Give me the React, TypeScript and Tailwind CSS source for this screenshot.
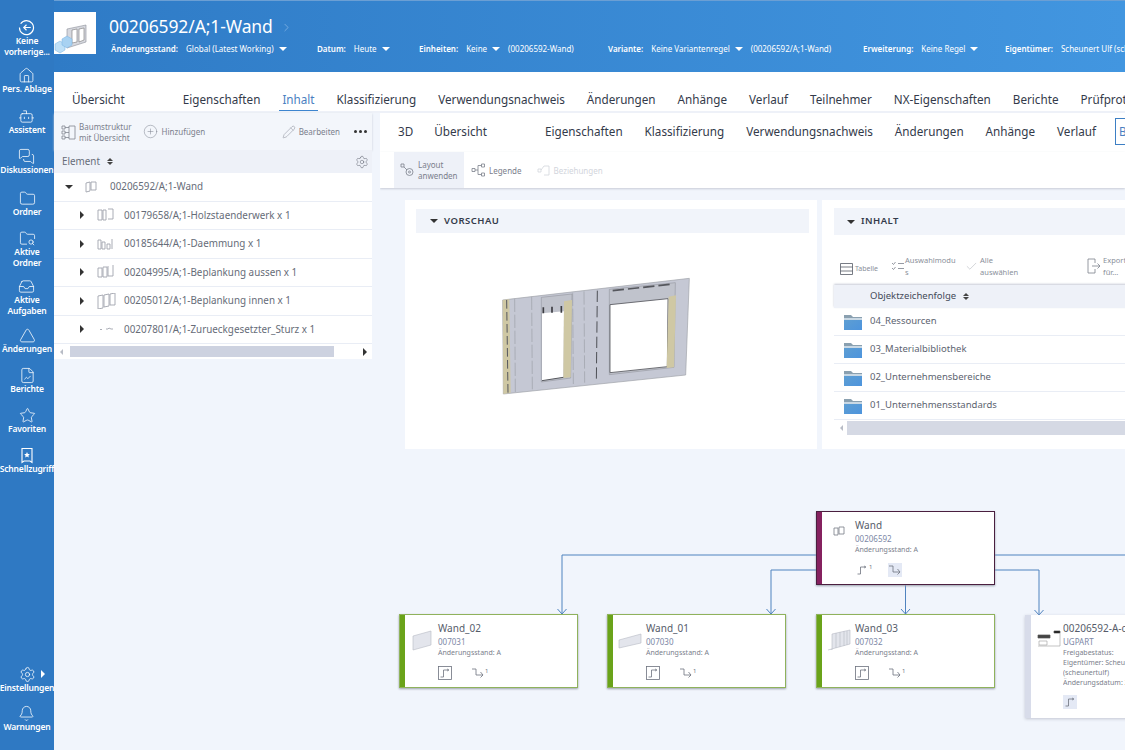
import {
  Bell,
  Bot,
  Check,
  ChevronRight,
  CirclePlus,
  FileChartLine,
  Folder,
  FolderSearch,
  House,
  Inbox,
  MessagesSquare,
  Pencil,
  Settings,
  Star,
  Triangle,
} from "lucide-react";
import type { ReactNode } from "react";

function Caret({ className = "border-t-white" }: { className?: string }) {
  return <span className={`inline-block h-0 w-0 shrink-0 border-x-[4px] border-t-[4px] border-x-transparent ${className}`} />;
}

function SideRight({ className = "" }: { className?: string }) {
  return <span className={`inline-block h-0 w-0 shrink-0 border-y-[4px] border-l-[4px] border-y-transparent border-l-[#333] ${className}`} />;
}

function SideItem({ icon, lines, className = "" }: { icon: ReactNode; lines: string[]; className?: string }) {
  return (
    <div className={`flex flex-col items-center text-center text-[8.5px] font-semibold leading-[11px] tracking-[-0.15px] text-white ${className}`}>
      <div className="flex h-[16px] items-center justify-center">{icon}</div>
      <div className="whitespace-nowrap">
        {lines.map((l) => (
          <div key={l}>{l}</div>
        ))}
      </div>
    </div>
  );
}

const sideIcon = { size: 17, strokeWidth: 1.1, color: "white" };

function BackIcon() {
  return (
    <svg width="17" height="17" viewBox="0 0 16 16" fill="none" stroke="white" strokeWidth="1.1">
      <path d="M2.500 4.500A6.600 6.600 0 1 1 1.400 8" />
      <path d="M12 8H5.500M8 5.400 5.400 8 8 10.600" />
    </svg>
  );
}

function QuickIcon() {
  return (
    <svg width="14" height="17" viewBox="0 0 14 16" fill="none" stroke="white" strokeWidth="1.1">
      <path d="M2 1h10v14l-2-1.500H4L2 15z" />
      <path d="m7 4.500.9 1.900 2 .2-1.500 1.400.4 2L7 9.100l-1.800.9.4-2-1.500-1.400 2-.2z" fill="white" stroke="none" />
    </svg>
  );
}

function Sidebar() {
  return (
    <aside className="flex h-full w-[54px] shrink-0 flex-col justify-between bg-[#2f79c3] pb-[18px] pt-[19px]">
      <div className="flex flex-col items-center">
        <SideItem icon={<BackIcon />} lines={["Keine", "vorherige..."]} />
        <SideItem icon={<House {...sideIcon} />} lines={["Pers. Ablage"]} className="mt-[10px]" />
        <SideItem icon={<Bot {...sideIcon} />} lines={["Assistent"]} className="mt-[14px]" />
        <SideItem icon={<MessagesSquare {...sideIcon} />} lines={["Diskussionen"]} className="mt-[13px]" />
        <SideItem icon={<Folder {...sideIcon} />} lines={["Ordner"]} className="mt-[15px]" />
        <SideItem icon={<FolderSearch {...sideIcon} />} lines={["Aktive", "Ordner"]} className="mt-[13px]" />
        <SideItem icon={<Inbox {...sideIcon} />} lines={["Aktive", "Aufgaben"]} className="mt-[10px]" />
        <SideItem icon={<Triangle {...sideIcon} />} lines={["Änderungen"]} className="mt-[11px]" />
        <SideItem icon={<FileChartLine {...sideIcon} />} lines={["Berichte"]} className="mt-[13px]" />
        <SideItem icon={<Star {...sideIcon} />} lines={["Favoriten"]} className="mt-[13px]" />
        <SideItem icon={<QuickIcon />} lines={["Schnellzugriff"]} className="mt-[13px]" />
      </div>
      <div className="flex flex-col items-center">
        <div className="relative">
          <SideItem icon={<Settings {...sideIcon} />} lines={["Einstellungen"]} />
          <SideRight className="absolute left-[41px] top-[4px] border-l-white" />
        </div>
        <SideItem icon={<Bell {...sideIcon} />} lines={["Warnungen"]} className="mt-[12px]" />
      </div>
    </aside>
  );
}

function WallThumb() {
  return (
    <svg width="42" height="42" viewBox="0 0 42 42">
      <path d="M13 17 32 13v17l-19 6z" fill="#d6d8de" stroke="#8b8f98" strokeWidth="0.6" />
      <path d="M18 18l5-1v13l-5 1zM25 17l5-1v12l-5 2z" fill="white" stroke="#777" strokeWidth="0.6" />
      <path d="M1 32l5-3 5 3v6l-5 3-5-3z" fill="#bfe0f7" stroke="#7ab3e0" strokeWidth="0.5" />
      <path d="M8 27l5-3 5 3v6l-5 3-5-3z" fill="#a8d2f2" stroke="#7ab3e0" strokeWidth="0.5" />
    </svg>
  );
}

function Meta({ label, value, caret, extra, className }: { label: string; value: string; caret?: boolean; extra?: string; className: string }) {
  return (
    <div className={`flex shrink-0 items-center whitespace-nowrap ${className}`}>
      <span className="font-semibold">{label}</span>
      <span className="ml-[8px]">{value}</span>
      {caret && <Caret className="ml-[5px] border-t-white" />}
      {extra && <span className="ml-[8px]">{extra}</span>}
    </div>
  );
}

function Header() {
  return (
    <header className="h-[72px] shrink-0 border-t border-[#6b9fd4] bg-gradient-to-r from-[#2f7bc6] to-[#4296e0] text-white">
      <div className="flex items-start pt-[11px]">
        <div className="flex h-[42px] w-[42px] shrink-0 items-center justify-center bg-white">
          <WallThumb />
        </div>
        <div className="ml-[13px] flex h-[30px] items-center text-[17.5px] leading-none tracking-[-0.1px]">
          00206592/A;1-Wand
          <ChevronRight size={13} strokeWidth={1} className="ml-[7px] text-[#a9cdf0]" />
        </div>
      </div>
      <div className="-mt-[11px] flex overflow-hidden pl-[57px] text-[8px] leading-[12px]">
        <Meta className="w-[206px]" label="Änderungsstand:" value="Global (Latest Working)" caret />
        <Meta className="w-[102px]" label="Datum:" value="Heute" caret />
        <Meta className="w-[189px]" label="Einheiten:" value="Keine" caret extra="(00206592-Wand)" />
        <Meta className="w-[255px]" label="Variante:" value="Keine Variantenregel" caret extra="(00206592/A;1-Wand)" />
        <Meta className="w-[142px]" label="Erweiterung:" value="Keine Regel" caret />
        <Meta className="w-[130px]" label="Eigentümer:" value="Scheunert Ulf (scheunertulf)" />
      </div>
    </header>
  );
}

function Tab({ children, className = "" }: { children: ReactNode; className?: string }) {
  return <span className={`shrink-0 whitespace-nowrap ${className}`}>{children}</span>;
}

function TopTabs() {
  return (
    <div className="flex h-[41px] shrink-0 items-end gap-[22px] border-b-2 border-[#eef1f8] bg-white pb-[4px] pl-[18px] text-[11.7px] leading-[16px] text-[#333a4a]">
      <Tab className="mr-[36px]">Übersicht</Tab>
      <Tab>Eigenschaften</Tab>
      <div className="relative shrink-0 text-[#4a7fc1]">
        Inhalt
        <div className="absolute -bottom-[4px] -left-[3px] -right-[3px] h-[1.5px] bg-[#3d85cf]" />
      </div>
      <Tab>Klassifizierung</Tab>
      <Tab>Verwendungsnachweis</Tab>
      <Tab>Änderungen</Tab>
      <Tab>Anhänge</Tab>
      <Tab>Verlauf</Tab>
      <Tab>Teilnehmer</Tab>
      <Tab>NX-Eigenschaften</Tab>
      <Tab>Berichte</Tab>
      <Tab>Prüfprotokoll</Tab>
    </div>
  );
}

function PartIcon({ kind }: { kind: number }) {
  const paths = [
    "M1 3h4v10H1zM6 3h3v10H6zM11 2h5v10h-5",
    "M1 4h3v9H1zM5 6h3v7H5zM10 8h3v5h-3zM15 3v10",
    "M1 4h4v9H1zM6 3h4v10H6zM11 2v10h5V1",
    "M1 3l5-1v13l-5 1zM7 2l5-1v12l-5 1zM13 1l5-1v12h-5z",
    "M3 9l1-1 1 1M9 8h2l1-1 2 1h2",
    "M1 4l4-1v9l-4 1zM6 3h5v8H6z",
  ];
  return (
    <svg width="20" height="16" viewBox="0 0 20 16" fill="none" stroke="#a0a4ae" strokeWidth="0.9">
      <path d={paths[kind]} />
    </svg>
  );
}

function TreeRow({ kind, text }: { kind: number; text: string }) {
  return (
    <div className="flex h-[28.500px] items-center border-b border-[#e9edf5] pl-[26px]">
      <SideRight className="border-l-[#333]" />
      <div className="ml-[13px] flex w-[26px] shrink-0 items-center">
        <PartIcon kind={kind} />
      </div>
      <span className="ml-[1px] whitespace-nowrap">{text}</span>
    </div>
  );
}

function SortIcon() {
  return (
    <span className="ml-[7px] flex flex-col gap-[1px]">
      <span className="h-0 w-0 border-x-[3px] border-b-[3px] border-x-transparent border-b-[#444]" />
      <span className="h-0 w-0 border-x-[3px] border-t-[3px] border-x-transparent border-t-[#444]" />
    </span>
  );
}

function LeftPanel() {
  return (
    <section className="flex h-full w-[318px] shrink-0 flex-col text-[#666c78]">
      <div className="flex h-[37px] shrink-0 items-center bg-[#f3f6fb] pl-[7px] pr-[5px] text-[8px] leading-[11px] text-[#7b808c] shadow-[0_1px_2px_#c7cbd6]">
        <svg width="15" height="16" viewBox="0 0 15 16" fill="none" stroke="#80858f" strokeWidth="0.8">
          <path d="M1 2h3v3H1zM1 7h3v3H1zM1 12h3v3H1zM8 2h6v13H8zM4 3.500h4M4 8.500h4M4 13.500h4" />
        </svg>
        <div className="ml-[3px] whitespace-nowrap">
          <div>Baumstruktur</div>
          <div>mit Übersicht</div>
        </div>
        <CirclePlus size={15} strokeWidth={0.8} className="ml-[11px] text-[#7b808c]" />
        <span className="ml-[4px]">Hinzufügen</span>
        <Pencil size={14} strokeWidth={0.8} className="ml-auto text-[#7b808c]" />
        <span className="ml-[3px]">Bearbeiten</span>
        <span className="ml-[14px] flex gap-[2px]">
          <span className="h-[3px] w-[3px] rounded-full bg-[#333]" />
          <span className="h-[3px] w-[3px] rounded-full bg-[#333]" />
          <span className="h-[3px] w-[3px] rounded-full bg-[#333]" />
        </span>
      </div>
      <div className="flex h-[23px] shrink-0 items-center bg-[#eef1f8] pl-[8px] pr-[3px] text-[9.850px]">
        <span>Element</span>
        <SortIcon />
        <Settings size={14} strokeWidth={0.8} className="ml-auto text-[#4e5360]" />
      </div>
      <div className="bg-white text-[9.850px]">
        <div className="flex h-[28.500px] items-center border-b border-[#e9edf5] pl-[11px]">
          <Caret className="border-t-[#333]" />
          <div className="ml-[12px] w-[25px] shrink-0">
            <PartIcon kind={5} />
          </div>
          <span>00206592/A;1-Wand</span>
        </div>
        <TreeRow kind={0} text="00179658/A;1-Holzstaenderwerk x 1" />
        <TreeRow kind={1} text="00185644/A;1-Daemmung x 1" />
        <TreeRow kind={2} text="00204995/A;1-Beplankung aussen x 1" />
        <TreeRow kind={3} text="00205012/A;1-Beplankung innen x 1" />
        <TreeRow kind={4} text="00207801/A;1-Zurueckgesetzter_Sturz x 1" />
      </div>
      <div className="flex h-[15px] shrink-0 items-center bg-white pl-[6px] pr-[5px]">
        <span className="h-0 w-0 border-y-[3px] border-r-[3px] border-y-transparent border-r-[#b8bcc6]" />
        <div className="ml-[7px] h-[11px] w-[264px] bg-[#cdd2e0]" />
        <SideRight className="ml-auto border-y-[3px] border-l-[3px]" />
      </div>
    </section>
  );
}

function RightTabs() {
  return (
    <div className="flex h-[39px] shrink-0 items-center gap-[22px] pb-[3px] pl-[18px] text-[11.700px] leading-[16px] text-[#333a4a]">
      <Tab className="-mr-[1px]">3D</Tab>
      <Tab className="mr-[36px]">Übersicht</Tab>
      <Tab>Eigenschaften</Tab>
      <Tab>Klassifizierung</Tab>
      <Tab>Verwendungsnachweis</Tab>
      <Tab>Änderungen</Tab>
      <Tab>Anhänge</Tab>
      <Tab className="-mr-[3px]">Verlauf</Tab>
      <div className="flex h-[27px] w-[60px] shrink-0 items-center border border-[#3d7fc4] pl-[3px] text-[#4a7fc1]">Berichte</div>
    </div>
  );
}

function RightToolbar() {
  return (
    <div className="flex h-[36px] shrink-0 items-stretch pl-[14px] text-[8px] leading-[11px] text-[#7b808c] shadow-[0_1px_2px_#c7cbd6]">
      <div className="flex w-[70px] items-center bg-[#eef1f8] pl-[6px]">
        <svg width="14" height="16" viewBox="0 0 14 16" fill="none" stroke="#7b808c" strokeWidth="0.8">
          <path d="M1 2h3v3H1zM4 5l3 3" />
          <circle cx="9.500" cy="10" r="3.500" />
          <circle cx="9.500" cy="10" r="1" />
        </svg>
        <div className="ml-[4px] whitespace-nowrap">
          <div>Layout</div>
          <div>anwenden</div>
        </div>
      </div>
      <div className="ml-[7px] flex items-center">
        <svg width="15" height="14" viewBox="0 0 15 14" fill="none" stroke="#7b808c" strokeWidth="0.8">
          <path d="M1 5.500h3v3H1zM10.500 1h3v3h-3zM10.500 10h3v3h-3zM4 7h3M7 2.500v9M7 2.500h3.500M7 11.500h3.500" />
        </svg>
        <span className="ml-[3px]">Legende</span>
      </div>
      <div className="ml-[15px] flex items-center text-[#d2d5dc]">
        <svg width="14" height="14" viewBox="0 0 14 14" fill="none" stroke="#d2d5dc" strokeWidth="0.8">
          <path d="M1 6h3v3H1zM4 7l3-4h5M7 12h5M12 3v9" />
        </svg>
        <span className="ml-[3px]">Beziehungen</span>
      </div>
    </div>
  );
}

function WallPreview() {
  return (
    <svg width="240" height="150" viewBox="0 0 720 450" className="ml-[75px] mt-[27px] blur-[0.4px]">
      <path d="M68 120 628 55 617 345 70 402Z" fill="#c5c8d4" stroke="#9fa1a8" strokeWidth="2" />
      <path d="M68 120 88 118 92 398 70 402Z" fill="#cfc8a4" />
      <path d="M80 120 84 398" stroke="#55575d" strokeWidth="3" strokeDasharray="26 10" fill="none" />
      <path d="M104 116 106 396M155 110 157 388M278 98 280 372M312 94 314 368" stroke="#a4a7b0" strokeWidth="2.500" strokeDasharray="40 8" fill="none" />
      <path d="M352 92 349 368" stroke="#4e5056" strokeWidth="3" strokeDasharray="34 12" fill="none" />
      <path d="M184 112 276 102 272 354 184 366Z" fill="#c0c3cc" stroke="#8a8c94" strokeWidth="1.500" />
      <path d="M186 160 252 154 250 352 186 362Z" fill="white" />
      <path d="M252 124 276 120 272 352 250 354Z" fill="#cfc8a4" />
      <path d="M186 362 250 352" stroke="#55575d" strokeWidth="3" />
      <path d="M190 142v18M216 140v18M244 138v20" stroke="#3c3d42" strokeWidth="5" />
      <path d="M388 88 586 68 582 322 388 344Z" fill="#c0c3cc" stroke="#8a8c94" strokeWidth="1.500" />
      <path d="M390 134 564 116 562 320 390 338Z" fill="white" stroke="#55575d" strokeWidth="2.500" />
      <path d="M566 110 588 106 582 322 560 324Z" fill="#cfc8a4" />
      <path d="M398 92 580 72" stroke="#55575d" strokeWidth="5" strokeDasharray="34 12" />
    </svg>
  );
}

function ContentToolbar() {
  return (
    <div className="flex h-[50px] items-end pb-[6px] pl-[6px] text-[7.500px] leading-[12px] text-[#8a8f9a]">
      <div className="flex items-center pb-[4px]">
        <svg width="13" height="12" viewBox="0 0 13 12" fill="none" stroke="#555a66" strokeWidth="0.8">
          <path d="M.5.500h12v11H.5zM.5 4h12M.5 8h12" />
        </svg>
        <span className="ml-[2px] text-[7px]">Tabelle</span>
      </div>
      <div className="ml-[13px] flex items-center pb-[1px]">
        <svg width="14" height="12" viewBox="0 0 14 12" fill="none" stroke="#7b808c" strokeWidth="0.8">
          <path d="m1 3 1.500 1.500L4.500 2M1 8l1.500 1.500L4.500 7M7 3.500h6M7 8.500h6" />
        </svg>
        <div className="w-[48px] whitespace-nowrap">
          <div>Auswahlmodu</div>
          <div>s</div>
        </div>
      </div>
      <div className="ml-[12px] flex items-center pb-[1px]">
        <Check size={13} strokeWidth={0.7} className="text-[#8a8f9a]" />
        <div className="ml-[2px] whitespace-nowrap">
          <div>Alle</div>
          <div>auswählen</div>
        </div>
      </div>
      <div className="ml-[69px] flex items-center pb-[1px]">
        <svg width="14" height="16" viewBox="0 0 14 16" fill="none" stroke="#7b808c" strokeWidth="0.8">
          <path d="M8 5V1H1v14h7v-4M5 8h8M10.500 5.500 13 8l-2.500 2.500" />
        </svg>
        <div className="ml-[2px] whitespace-nowrap">
          <div>Export</div>
          <div>für...</div>
        </div>
      </div>
    </div>
  );
}

function FolderIcon() {
  return (
    <svg width="18" height="16" viewBox="0 0 18 16">
      <defs>
        <linearGradient id="folderFill" x1="0" y1="0" x2="1" y2="1">
          <stop offset="0" stopColor="#5f9fd2" />
          <stop offset="1" stopColor="#4d94dd" />
        </linearGradient>
      </defs>
      <path d="M0 1h7l2 2h9v13H0z" fill="#8aa0b0" />
      <path d="M0 4h18v12H0z" fill="url(#folderFill)" />
      <path d="M0 4h18v2H0z" fill="#c9d8e4" />
    </svg>
  );
}

function ContentCard() {
  const rows = ["04_Ressourcen", "03_Materialbibliothek", "02_Unternehmensbereiche", "01_Unternehmensstandards"];
  return (
    <div className="ml-[5px] h-[249px] w-[420px] shrink-0 bg-white pl-[12px] pt-[8px]">
      <div className="flex h-[27px] items-center bg-[#f1f4fa] pl-[13px] text-[9.500px] font-semibold tracking-[0.5px] text-[#333a4a]">
        <Caret className="border-t-[#333]" />
        <span className="ml-[6px]">INHALT</span>
      </div>
      <ContentToolbar />
      <div className="flex h-[23px] items-center bg-[#eef1f8] pl-[36px] text-[9.500px] text-[#444a58] shadow-[0_-1px_2px_#c7cbd6]">
        Objektzeichenfolge
        <SortIcon />
      </div>
      {rows.map((r) => (
        <div key={r} className="flex h-[28px] items-center border-b border-[#e9edf5] pl-[10px] text-[9.500px] text-[#5c6370]">
          <FolderIcon />
          <span className="ml-[8px]">{r}</span>
        </div>
      ))}
      <div className="flex h-[15px] items-center pl-[6px]">
        <span className="h-0 w-0 border-y-[3px] border-r-[3px] border-y-transparent border-r-[#b8bcc6]" />
        <div className="ml-[4px] h-[14px] flex-1 bg-[#d5d9e4]" />
      </div>
    </div>
  );
}

function StepIcon({ boxed }: { boxed?: boolean }) {
  return (
    <svg width="14" height="14" viewBox="0 0 14 14" fill="none" stroke="#6d727e" strokeWidth="0.8">
      {boxed && <rect x="0.500" y="0.500" width="13" height="13" />}
      <path d="M2.500 11h3V4h4M9 3l2 1-2 1" />
    </svg>
  );
}

function DownIcon() {
  return (
    <svg width="14" height="12" viewBox="0 0 14 12" fill="none" stroke="#6d727e" strokeWidth="0.8">
      <path d="M1 2h4v6h7M9.500 5 12 8l-2.500 2.500" />
    </svg>
  );
}

function Node({ title, code, bar, border, thumb, className, children }: { title: string; code: string; bar: string; border: string; thumb: ReactNode; className: string; children: ReactNode }) {
  return (
    <div className={`absolute flex h-[74px] w-[179px] overflow-hidden border bg-white shadow-[0_1px_2px_#9aa0ac] ${border} ${className}`}>
      <div className={`h-full w-[5px] shrink-0 ${bar}`} />
      <div className="flex w-[33px] shrink-0 justify-center pt-[14px]">{thumb}</div>
      <div className="min-w-0 flex-1 pt-[6px]">
        <div className="text-[10px] leading-[15px] text-[#565c6a]">{title}</div>
        <div className="text-[8px] leading-[12px] text-[#7c88a6]">{code}</div>
        <div className="text-[7px] leading-[10px] text-[#7b808c]">Änderungsstand: A</div>
        <div className="mt-[8px] flex h-[14px] items-center gap-[19px] text-[6px] text-[#6d727e]">{children}</div>
      </div>
    </div>
  );
}

function NodeThumb({ d }: { d: string }) {
  return (
    <svg width="24" height="24" viewBox="0 0 24 24" fill="#e3e5ec" stroke="#b7bac4" strokeWidth="0.6">
      <path d={d} />
    </svg>
  );
}

function Diagram() {
  return (
    <div className="relative min-h-0 flex-1">
      <svg className="absolute inset-0" width="745" height="301" fill="none" stroke="#4f83bf" strokeWidth="1">
        <path d="M436 106H182V165M177.500 160 182 165 186.500 160" />
        <path d="M436 121H391V165M386.500 160 391 165 395.500 160" />
        <path d="M525.500 136V165M521 160 525.500 165 530 160" />
        <path d="M615 106H745M615 121H659V166M654.500 161 659 166 663.500 161" />
      </svg>

      <Node
        className="left-[436px] top-[62px]"
        title="Wand"
        code="00206592"
        bar="bg-[#85215f]"
        border="border-[#4a1f3f]"
        thumb={
          <svg width="12" height="10" viewBox="0 0 12 10" fill="none" stroke="#777b86" strokeWidth="0.8">
            <path d="M1 2h4v7H1zM6 1h5v7H6z" />
          </svg>
        }
      >
        <span className="flex items-start">
          <StepIcon />1
        </span>
        <span className="-ml-[3px] flex h-[14px] w-[14px] items-center justify-center bg-[#e4e9f5]">
          <DownIcon />
        </span>
      </Node>

      <Node className="left-[19px] top-[165px]" title="Wand_02" code="007031" bar="bg-[#6aa31a]" border="border-[#8fb25c]" thumb={<NodeThumb d="M3 7 21 2V16L3 21Z" />}>
        <StepIcon boxed />
        <span className="flex items-start">
          <DownIcon />1
        </span>
      </Node>
      <Node className="left-[227px] top-[165px]" title="Wand_01" code="007030" bar="bg-[#6aa31a]" border="border-[#8fb25c]" thumb={<NodeThumb d="M1 11 23 5V14L1 19Z" />}>
        <StepIcon boxed />
        <span className="flex items-start">
          <DownIcon />1
        </span>
      </Node>
      <Node className="left-[436px] top-[165px]" title="Wand_03" code="007032" bar="bg-[#6aa31a]" border="border-[#8fb25c]" thumb={<NodeThumb d="M1 21 23 15V1L5 5V21M9 4V19M13 3V18M17 2V17M20 2V16" />}>
        <StepIcon boxed />
        <span className="flex items-start">
          <DownIcon />1
        </span>
      </Node>

      <div className="absolute left-[645px] top-[166px] flex h-[103px] w-[200px] overflow-hidden bg-white shadow-[0_1px_3px_#c2c6d2]">
        <div className="h-full w-[6px] shrink-0 bg-[#d8dcea]" />
        <div className="w-[32px] shrink-0 pl-[6px] pt-[15px]">
          <svg width="24" height="18" viewBox="0 0 24 18" fill="none" stroke="#555" strokeWidth="0.7">
            <path d="M1 5h12v3H1z" fill="#444" />
            <path d="M17 1h6v2h-6z" fill="#111" />
            <path d="M23 3v13H1M2 11h8v4H2z" stroke="#aaa" />
          </svg>
        </div>
        <div className="min-w-0 flex-1 overflow-hidden whitespace-nowrap pt-[6px]">
          <div className="text-[10px] leading-[15px] text-[#565c6a]">00206592-A-catpart</div>
          <div className="text-[8px] leading-[12px] text-[#7c88a6]">UGPART</div>
          <div className="text-[7px] leading-[10px] text-[#7b808c]">
            <div>Freigabestatus:</div>
            <div>Eigentümer: Scheunert Ulf</div>
            <div>(scheunertulf)</div>
            <div>Änderungsdatum: 2020</div>
          </div>
          <div className="mt-[7px] flex h-[14px] w-[14px] items-center justify-center bg-[#e4e9f5]">
            <StepIcon />
          </div>
        </div>
      </div>
    </div>
  );
}

function RightPanel() {
  return (
    <section className="ml-[8px] flex h-full min-w-0 flex-1 flex-col overflow-hidden">
      <div className="shrink-0 bg-white">
        <RightTabs />
        <RightToolbar />
      </div>
      <div className="flex shrink-0 pl-[25px] pt-[12px]">
        <div className="h-[249px] w-[412px] shrink-0 bg-white pl-[11px] pr-[8px] pt-[9px]">
          <div className="flex h-[24px] items-center bg-[#f1f4fa] pl-[14px] text-[9.500px] font-semibold tracking-[0.5px] text-[#333a4a]">
            <Caret className="border-t-[#333]" />
            <span className="ml-[6px]">VORSCHAU</span>
          </div>
          <div className="-ml-[11px]">
            <WallPreview />
          </div>
        </div>
        <ContentCard />
      </div>
      <Diagram />
    </section>
  );
}

export default function App() {
  return (
    <div className="flex h-[750px] w-[1125px] overflow-hidden bg-[#f1f5fc]" style={{ fontFamily: '"Noto Sans", "Open Sans", sans-serif' }}>
      <Sidebar />
      <div className="flex h-full min-w-0 flex-1 flex-col">
        <Header />
        <TopTabs />
        <main className="flex min-h-0 flex-1">
          <LeftPanel />
          <RightPanel />
        </main>
      </div>
    </div>
  );
}
